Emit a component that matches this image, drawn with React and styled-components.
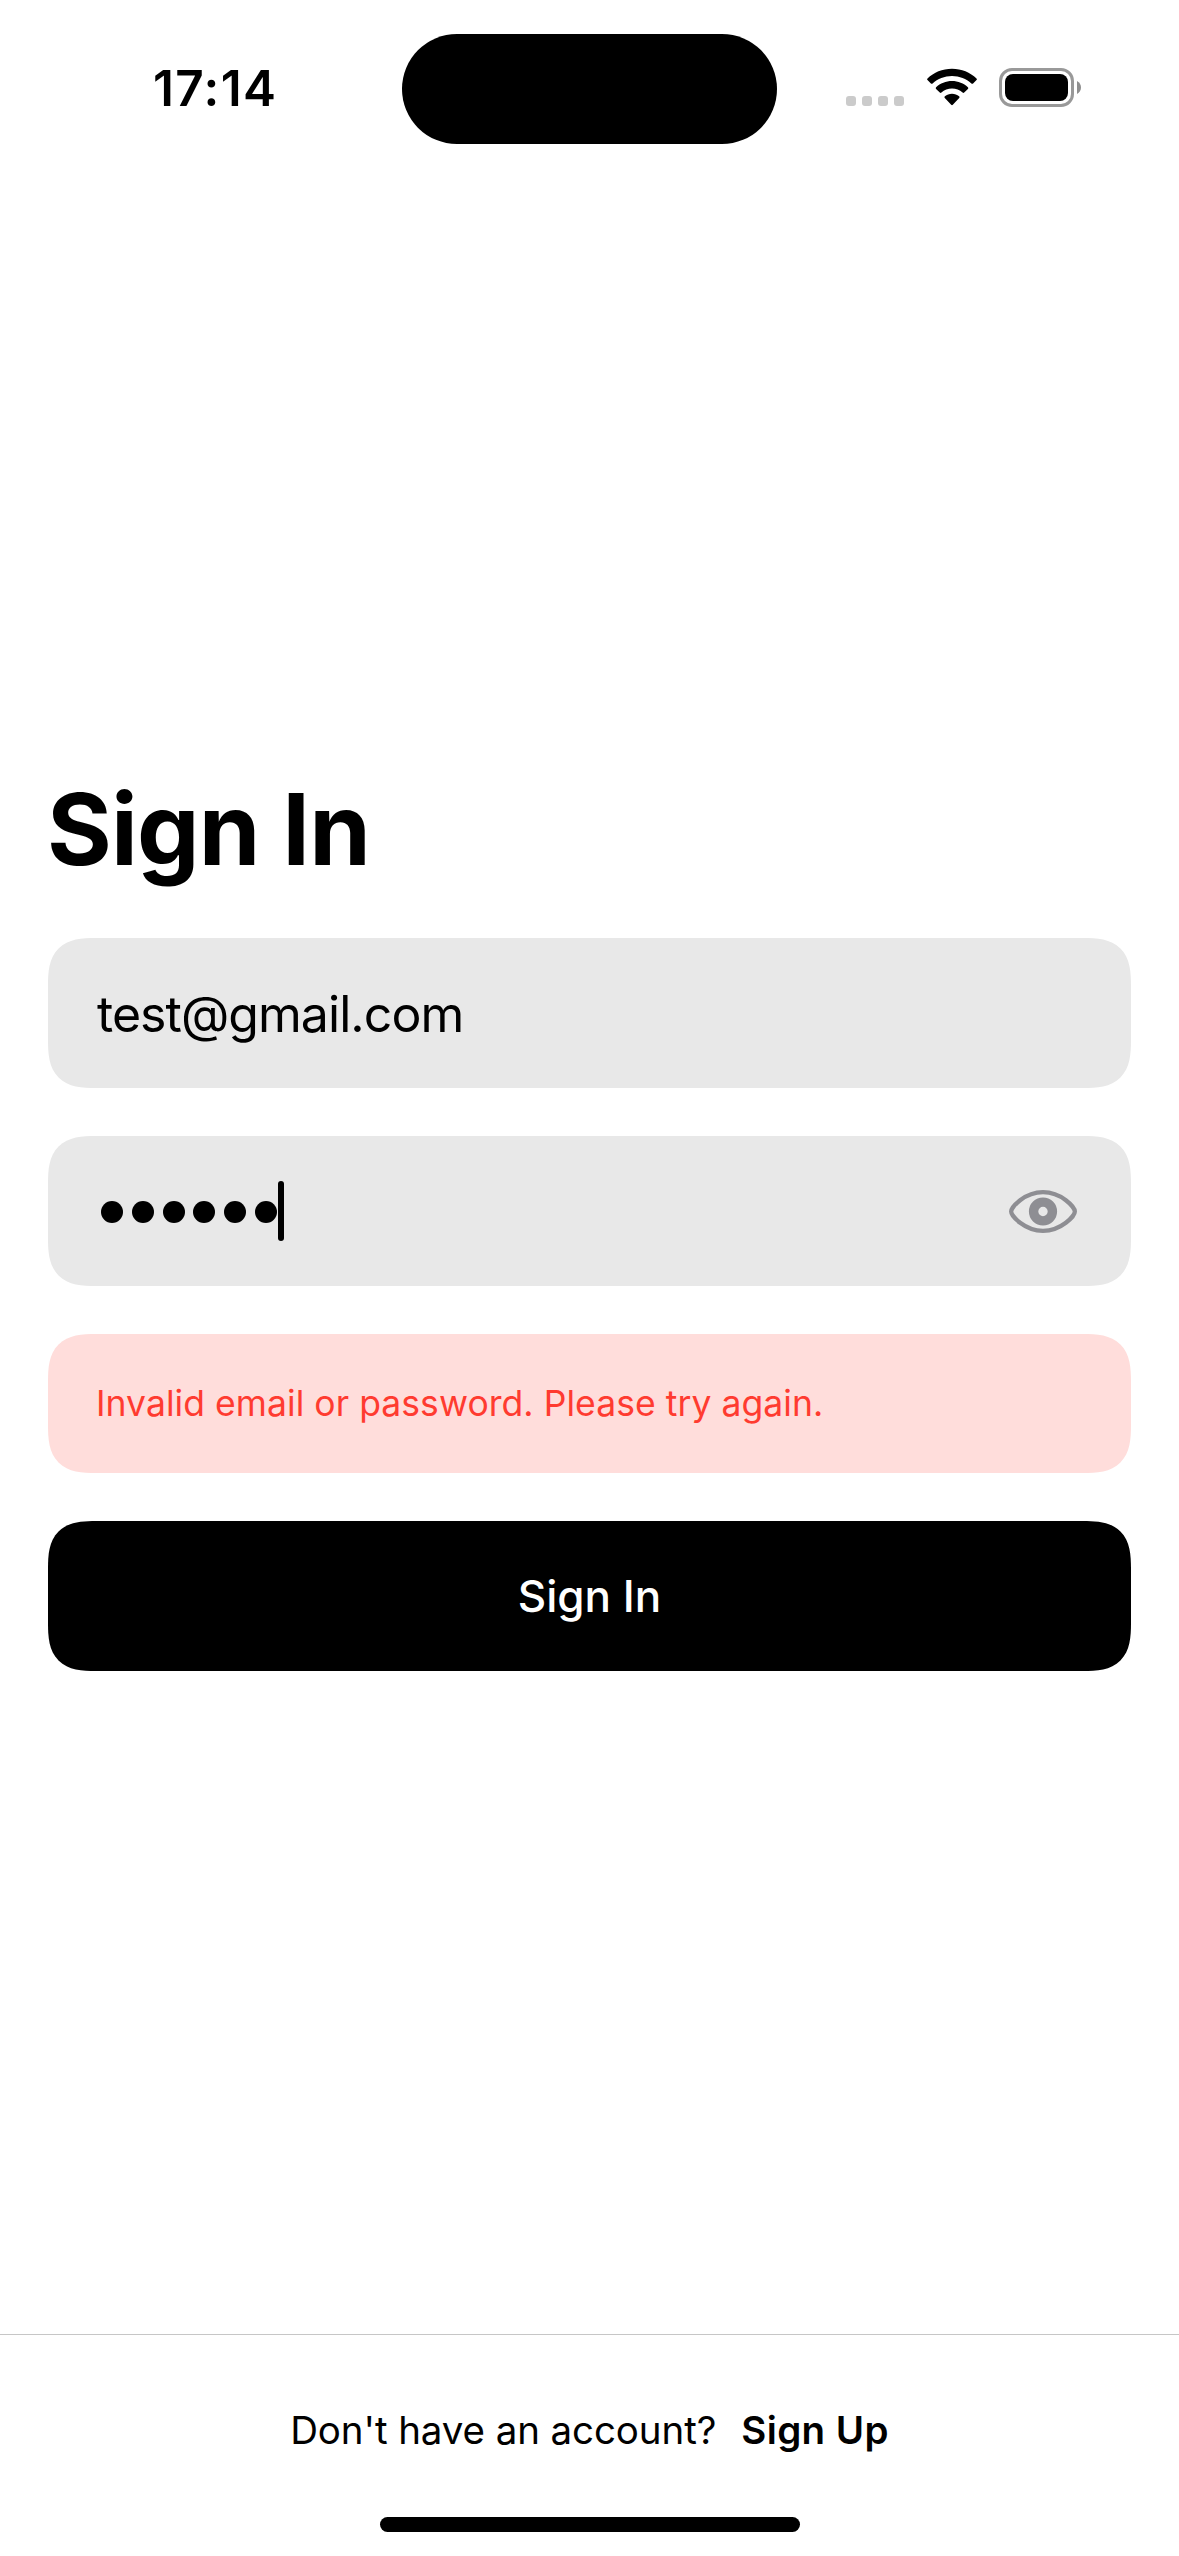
import React from "react";
import styled, { createGlobalStyle, css } from "styled-components";

const GlobalStyle = createGlobalStyle`
  * { box-sizing: border-box; }
  html, body { margin: 0; padding: 0; background: #fff; }
  button { border: 0; padding: 0; background: none; color: inherit; font: inherit; }
`;

const continuousCorners = css`
  border-radius: 36px;
  @supports (corner-shape: superellipse(1.48)) {
    border-radius: 48px;
    corner-shape: superellipse(1.48);
  }
`;

const Screen = styled.div`
  width: 1179px;
  height: 2556px;
  display: flex;
  flex-direction: column;
  overflow: hidden;
  background: #fff;
  color: #000;
  font-family: Inter, "Liberation Sans", sans-serif;
  font-kerning: normal;
`;

const StatusBar = styled.header`
  height: 177px;
  display: grid;
  grid-template-columns: 401.7px 375.6px 1fr;
  align-items: start;
`;

const Time = styled.time`
  padding: 58px 0 0 153px;
  font-size: 49.5px;
  line-height: 60px;
  font-weight: 600;
  letter-spacing: 1.4px;
  white-space: nowrap;
`;

const Island = styled.div`
  margin-top: 34px;
  height: 110px;
  border-radius: 55px;
  background: #000;
`;

const Indicators = styled.div`
  display: flex;
  align-items: flex-end;
  padding: 68px 0 0 68.7px;
`;

const Signal = styled.div`
  display: flex;
  gap: 6px;
  margin-bottom: 1px;
`;

const SignalDot = styled.i`
  width: 10px;
  height: 10px;
  border-radius: 3px;
  background: #cbcbcb;
`;

const WifiIcon = styled.svg`
  display: block;
  width: 50px;
  height: 38px;
  margin: 0 22.4px 1px 22.6px;
`;

const Battery = styled.div`
  width: 75px;
  height: 39px;
  padding: 3px;
  border: 3px solid #999;
  border-radius: 13px;
`;

const BatteryLevel = styled.div`
  height: 27px;
  border-radius: 8px;
  background: #000;
`;

const BatteryCap = styled.svg`
  display: block;
  width: 4px;
  height: 13px;
  margin: 0 0 13px 3px;
`;

const Form = styled.main`
  flex: 1;
  display: flex;
  flex-direction: column;
  gap: 48px;
  padding: 592px 48px 0;
`;

const Title = styled.h1`
  margin: 0 0 1px -1px;
  height: 120px;
  line-height: 120px;
  font-size: 99px;
  font-weight: 700;
  letter-spacing: -0.8px;
`;

const Field = styled.div`
  height: 150px;
  flex: none;
  display: flex;
  align-items: center;
  padding: 0 48px;
  background: #e8e8e8;
  ${continuousCorners}
`;

const FieldText = styled.span`
  padding: 1px 0 0 1px;
  font-size: 50px;
  line-height: 60px;
  letter-spacing: -0.95px;
`;

const Mask = styled.div`
  display: flex;
  gap: 8.8px;
  padding: 2px 0 0 5px;
`;

const MaskDot = styled.i`
  width: 22px;
  height: 22px;
  border-radius: 50%;
  background: #000;
`;

const Caret = styled.span`
  width: 6px;
  height: 60px;
  margin-left: 1px;
  border-radius: 3px;
  background: #000;
`;

const RevealButton = styled.button`
  margin: 0 6px 0 auto;
  width: 68px;
  height: 43px;
`;

const EyeIcon = styled.svg`
  display: block;
  width: 68px;
  height: 43px;
`;

const ErrorMessage = styled.div`
  height: 139px;
  flex: none;
  display: flex;
  align-items: center;
  padding: 0 48px;
  background: #ffdddb;
  color: #ff3b30;
  font-size: 35.5px;
  line-height: 44px;
  letter-spacing: 0.06px;
  white-space: nowrap;
  ${continuousCorners}
`;

const SubmitButton = styled.button`
  height: 150px;
  flex: none;
  background: #000;
  color: #fff;
  font-size: 44px;
  line-height: 54px;
  font-weight: 500;
  letter-spacing: 0;
  ${continuousCorners}
`;

const Footer = styled.footer`
  height: 222px;
  flex: none;
  display: flex;
  flex-direction: column;
  align-items: center;
  border-top: 1px solid #c6c6c6;
`;

const SignUpRow = styled.div`
  display: flex;
  gap: 25px;
  padding-top: 72px;
  height: 182px;
  font-size: 38.5px;
  line-height: 46px;
  white-space: nowrap;
`;

const Prompt = styled.span`
  letter-spacing: -0.1px;
`;

const SignUpLink = styled.button`
  height: 46px;
  font-weight: 600;
  letter-spacing: 0.4px;
`;

const HomeIndicator = styled.div`
  width: 420px;
  height: 15px;
  border-radius: 8px;
  background: #000;
`;

export default function App() {
  return (
    <Screen>
      <GlobalStyle />
      <StatusBar>
        <Time>17:14</Time>
        <Island />
        <Indicators>
          <Signal>
            {[0, 1, 2, 3].map((n) => (
              <SignalDot key={n} />
            ))}
          </Signal>
          <WifiIcon viewBox="0 0 50 38">
            <path d="M25 0.7C15.4 0.7 6.8 4.4 0.5 10.4C0 10.9 0 11.6 0.5 12.1L3.9 15.4C4.4 15.9 5.1 15.9 5.6 15.4C10.7 10.8 17.5 8 25 8S39.3 10.8 44.4 15.4C44.9 15.9 45.6 15.9 46.1 15.4L49.5 12.1C50 11.6 50 10.9 49.5 10.4C43.2 4.4 34.6 0.7 25 0.7Z" />
            <path d="M25 13.1C18.9 13.1 13.3 15.4 9.1 19.2C8.6 19.7 8.6 20.4 9.1 20.9L12.8 24.6C13.3 25 13.9 25 14.4 24.6C17.3 22.1 21 20.6 25 20.6S32.7 22.1 35.6 24.6C36.1 25 36.7 25 37.2 24.6L40.9 20.9C41.4 20.4 41.4 19.7 40.9 19.2C36.7 15.4 31.1 13.1 25 13.1Z" />
            <path d="M25 25.7C22.3 25.7 19.8 26.7 17.9 28.2C17.3 28.7 17.3 29.4 17.8 29.9L24.2 36.8C24.7 37.3 25.3 37.3 25.8 36.8L32.2 29.9C32.7 29.4 32.7 28.7 32.1 28.2C30.2 26.7 27.7 25.7 25 25.7Z" />
          </WifiIcon>
          <Battery>
            <BatteryLevel />
          </Battery>
          <BatteryCap viewBox="0 0 4 13" fill="#8f8f8f">
            <path d="M0 0C2.6 1.2 4 3.7 4 6.5S2.6 11.8 0 13Z" />
          </BatteryCap>
        </Indicators>
      </StatusBar>

      <Form>
        <Title>Sign In</Title>
        <Field>
          <FieldText>test@gmail.com</FieldText>
        </Field>
        <Field>
          <Mask>
            {[0, 1, 2, 3, 4, 5].map((n) => (
              <MaskDot key={n} />
            ))}
          </Mask>
          <Caret />
          <RevealButton aria-label="Show password">
            <EyeIcon viewBox="0 0 68 43" fill="none">
              <path
                d="M34 2.15C15.5 2.15 2.15 17.2 2.15 21.5S15.5 40.85 34 40.85S65.85 25.8 65.85 21.5S52.5 2.15 34 2.15Z"
                stroke="#8e8e93"
                strokeWidth="4.3"
              />
              <circle cx="34" cy="21.5" r="9.4" stroke="#8e8e93" strokeWidth="9.4" />
            </EyeIcon>
          </RevealButton>
        </Field>
        <ErrorMessage role="alert">
          Invalid email or password. Please try again.
        </ErrorMessage>
        <SubmitButton>Sign In</SubmitButton>
      </Form>

      <Footer>
        <SignUpRow>
          <Prompt>Don't have an account?</Prompt>
          <SignUpLink>Sign Up</SignUpLink>
        </SignUpRow>
        <HomeIndicator />
      </Footer>
    </Screen>
  );
}
